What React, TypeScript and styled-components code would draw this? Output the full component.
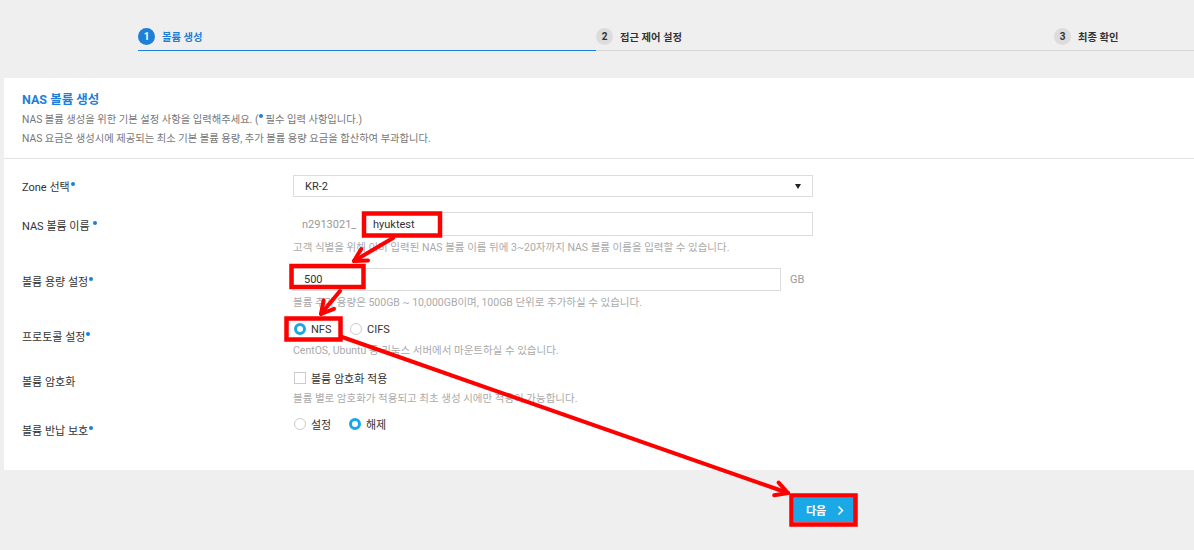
import React from "react";
import styled, { createGlobalStyle } from "styled-components";

const Global = createGlobalStyle`
  html, body { margin: 0; padding: 0; }
  body {
    background: #efefef;
    font-family: Roboto, "Noto Sans CJK KR", sans-serif;
    color: #333;
    width: 1194px;
    height: 550px;
    overflow: hidden;
  }
`;

const Page = styled.div`
  position: relative;
  width: 1194px;
  height: 550px;
`;

const Stepper = styled.div`
  display: flex;
  padding: 27px 0 0 138px;
  height: 52px;
  box-sizing: border-box;
`;

const Step = styled.div<{ $active?: boolean; $grow?: boolean }>`
  display: flex;
  align-items: center;
  gap: 7px;
  width: ${(p) => (p.$grow ? "auto" : "458px")};
  flex: ${(p) => (p.$grow ? "1" : "none")};
  height: 24px;
  box-sizing: border-box;
  padding-bottom: 5px;
  border-bottom: 1px solid ${(p) => (p.$active ? "#1e7fd8" : "#d6d6d6")};
`;

const StepNum = styled.span<{ $active?: boolean }>`
  width: 17px;
  height: 17px;
  border-radius: 50%;
  background: ${(p) => (p.$active ? "#1e7fd8" : "#dcdcdc")};
  color: ${(p) => (p.$active ? "#fff" : "#333")};
  font-size: 10px;
  font-weight: 700;
  display: flex;
  align-items: center;
  justify-content: center;
`;

const StepLabel = styled.span<{ $active?: boolean }>`
  font-size: 10.3px;
  font-weight: 700;
  color: ${(p) => (p.$active ? "#1e7fd8" : "#333")};
`;

const Card = styled.div`
  margin: 26px 0 0 4px;
  width: 1190px;
  height: 392px;
  background: #fff;
`;

const Header = styled.div`
  padding: 13px 18px 10px;
  border-bottom: 1px solid #e3e3e3;
`;

const Title = styled.div`
  color: #1e7fd8;
  font-size: 12.5px;
  font-weight: 700;
  line-height: 18px;
  margin-bottom: 1px;
`;

const Desc = styled.div`
  color: #777;
  font-size: 10.3px;
  line-height: 19px;
`;

const Dot = styled.span`
  display: inline-block;
  width: 4px;
  height: 4px;
  border-radius: 50%;
  background: #1e7fd8;
  vertical-align: 5px;
  margin: 0 2px 0 1px;
`;

const Form = styled.div`
  padding: 16px 18px 0;
`;

const Row = styled.div<{ $top: number }>`
  display: grid;
  grid-template-columns: 271px 1fr;
  margin-top: ${(p) => p.$top}px;
`;

const Label = styled.div<{ $offset: number }>`
  font-size: 11px;
  line-height: 22px;
  color: #333;
  padding-top: ${(p) => p.$offset}px;
`;

const Field = styled.div`
  display: flex;
  flex-direction: column;
`;

const Select = styled.div`
  width: 520px;
  height: 22px;
  box-sizing: border-box;
  border: 1px solid #dcdcdc;
  display: flex;
  align-items: center;
  justify-content: space-between;
  padding: 0 11px 0 11px;
  font-size: 11px;
  color: #333;
`;

const Caret = styled.span`
  width: 0;
  height: 0;
  border-left: 3.5px solid transparent;
  border-right: 3.5px solid transparent;
  border-top: 5px solid #222;
`;

const InputLine = styled.div`
  display: flex;
  align-items: center;
`;

const Prefix = styled.span`
  width: 60px;
  padding-left: 9px;
  font-size: 11px;
  color: #999;
`;

const TextBox = styled.div<{ $w: number; $h: number }>`
  width: ${(p) => p.$w}px;
  height: ${(p) => p.$h}px;
  box-sizing: border-box;
  border: 1px solid #dcdcdc;
  display: flex;
  align-items: center;
  padding-left: 10px;
  font-size: 11px;
  color: #333;
`;

const Unit = styled.span`
  margin-left: 9px;
  font-size: 11px;
  color: #999;
`;

const Hint = styled.div<{ $top: number }>`
  margin-top: ${(p) => p.$top}px;
  font-size: 10.5px;
  line-height: 16px;
  color: #aaa;
`;

const Options = styled.div`
  display: flex;
  align-items: center;
  height: 20px;
  padding-left: 1px;
`;

const Option = styled.label<{ $w: number }>`
  display: flex;
  align-items: center;
  gap: 5px;
  width: ${(p) => p.$w}px;
  font-size: 11px;
  color: #333;
`;

const Radio = styled.span<{ $on?: boolean }>`
  width: 12px;
  height: 12px;
  border-radius: 50%;
  box-sizing: border-box;
  border: ${(p) => (p.$on ? "3.5px solid #1ba6e6" : "1px solid #ccc")};
  background: #fff;
`;

const Check = styled.span`
  width: 12px;
  height: 12px;
  box-sizing: border-box;
  border: 1px solid #ccc;
  background: #fff;
`;

const Footer = styled.div`
  display: flex;
  padding: 28px 0 0 794px;
`;

const NextButton = styled.button`
  width: 60px;
  height: 24px;
  border: none;
  background: #1aa8e6;
  color: #fff;
  font-family: Roboto, "Noto Sans CJK KR", sans-serif;
  font-size: 11px;
  font-weight: 700;
  display: flex;
  align-items: center;
  justify-content: center;
  gap: 11px;
  padding: 0 0 0 2px;
`;

const Overlay = styled.svg`
  position: absolute;
  left: 0;
  top: 0;
  pointer-events: none;
`;

const Req = () => <Dot />;

function Arrow({ x1, y1, x2, y2 }: { x1: number; y1: number; x2: number; y2: number }) {
  const ang = Math.atan2(y2 - y1, x2 - x1);
  const len = 14;
  const a1 = ang + Math.PI - 0.5;
  const a2 = ang + Math.PI + 0.5;
  const p1 = `${x2 + len * Math.cos(a1)},${y2 + len * Math.sin(a1)}`;
  const p2 = `${x2 + len * Math.cos(a2)},${y2 + len * Math.sin(a2)}`;
  return (
    <g stroke="#ff0000" strokeWidth={4} fill="none" strokeLinecap="round" strokeLinejoin="round">
      <line x1={x1} y1={y1} x2={x2} y2={y2} />
      <polyline points={`${p1} ${x2},${y2} ${p2}`} />
    </g>
  );
}

export default function App() {
  return (
    <Page>
      <Global />
      <Stepper>
        <Step $active>
          <StepNum $active>1</StepNum>
          <StepLabel $active>볼륨 생성</StepLabel>
        </Step>
        <Step>
          <StepNum>2</StepNum>
          <StepLabel>접근 제어 설정</StepLabel>
        </Step>
        <Step $grow>
          <StepNum>3</StepNum>
          <StepLabel>최종 확인</StepLabel>
        </Step>
      </Stepper>

      <Card>
        <Header>
          <Title>NAS 볼륨 생성</Title>
          <Desc>
            NAS 볼륨 생성을 위한 기본 설정 사항을 입력해주세요. (<Req />필수 입력 사항입니다.)
          </Desc>
          <Desc>NAS 요금은 생성시에 제공되는 최소 기본 볼륨 용량, 추가 볼륨 용량 요금을 합산하여 부과합니다.</Desc>
        </Header>
        <Form>
          <Row $top={0}>
            <Label $offset={2}>
              Zone 선택<Req />
            </Label>
            <Field>
              <Select>
                <span>KR-2</span>
                <Caret />
              </Select>
            </Field>
          </Row>
          <Row $top={13}>
            <Label $offset={4}>
              NAS 볼륨 이름 <Req />
            </Label>
            <Field>
              <InputLine>
                <Prefix>n2913021_</Prefix>
                <TextBox $w={451} $h={24}>hyuktest</TextBox>
              </InputLine>
              <Hint $top={4}>고객 식별을 위해 이미 입력된 NAS 볼륨 이름 뒤에 3~20자까지 NAS 볼륨 이름을 입력할 수 있습니다.</Hint>
            </Field>
          </Row>
          <Row $top={12}>
            <Label $offset={4}>
              볼륨 용량 설정<Req />
            </Label>
            <Field>
              <InputLine>
                <TextBox $w={488} $h={23}>500</TextBox>
                <Unit>GB</Unit>
              </InputLine>
              <Hint $top={4}>볼륨 추가 용량은 500GB ~ 10,000GB이며, 100GB 단위로 추가하실 수 있습니다.</Hint>
            </Field>
          </Row>
          <Row $top={8}>
            <Label $offset={8}>
              프로토콜 설정<Req />
            </Label>
            <Field>
              <Options>
                <Option $w={56}>
                  <Radio $on />
                  NFS
                </Option>
                <Option $w={60}>
                  <Radio />
                  CIFS
                </Option>
              </Options>
              <Hint $top={4}>CentOS, Ubuntu 등 리눅스 서버에서 마운트하실 수 있습니다.</Hint>
            </Field>
          </Row>
          <Row $top={9}>
            <Label $offset={4}>볼륨 암호화</Label>
            <Field>
              <Options>
                <Option $w={120}>
                  <Check />
                  볼륨 암호화 적용
                </Option>
              </Options>
              <Hint $top={3}>볼륨 별로 암호화가 적용되고 최초 생성 시에만 적용이 가능합니다.</Hint>
            </Field>
          </Row>
          <Row $top={7}>
            <Label $offset={7}>
              볼륨 반납 보호<Req />
            </Label>
            <Field>
              <Options>
                <Option $w={55}>
                  <Radio />
                  설정
                </Option>
                <Option $w={60}>
                  <Radio $on />
                  해제
                </Option>
              </Options>
            </Field>
          </Row>
        </Form>
      </Card>

      <Footer>
        <NextButton>
          <span>다음</span>
          <svg width="7" height="11" viewBox="0 0 7 11">
            <polyline points="1.5,1.5 5.5,5.5 1.5,9.5" fill="none" stroke="#fff" strokeWidth="1.5" />
          </svg>
        </NextButton>
      </Footer>

      <Overlay width={1194} height={550} viewBox="0 0 1194 550">
        <g stroke="#ff0000" strokeWidth={4.5} fill="none">
          <rect x={364} y={213.5} width={76} height={22} />
          <rect x={291.5} y={266} width={72} height={21} />
          <rect x={286.5} y={318.5} width={54} height={21} />
          <rect x={791.5} y={495.5} width={64} height={29} />
        </g>
        <Arrow x1={393} y1={238} x2={354} y2={261} />
        <Arrow x1={340} y1={291} x2={321} y2={314} />
        <Arrow x1={342} y1={337} x2={788} y2={493} />
      </Overlay>
    </Page>
  );
}
